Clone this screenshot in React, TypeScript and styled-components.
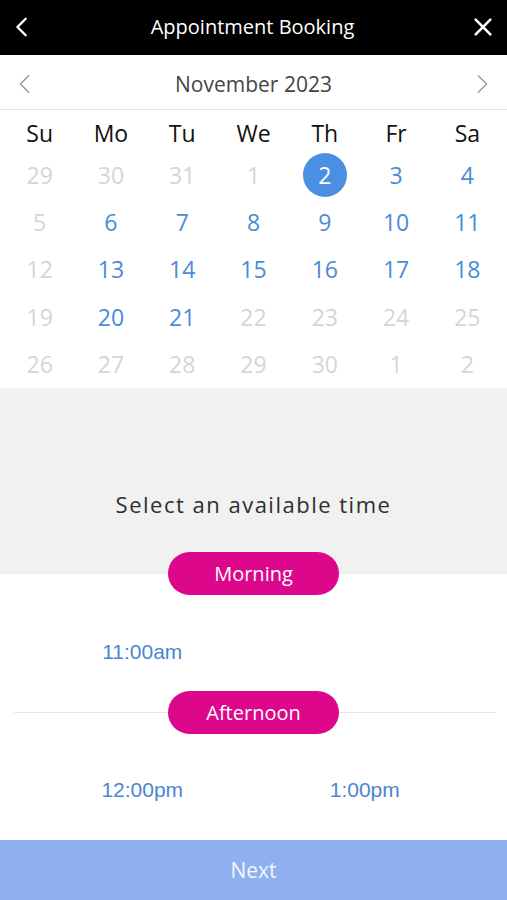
import styled, { createGlobalStyle } from 'styled-components';

const GlobalStyle = createGlobalStyle`
	html, body {
		margin: 0;
		padding: 0;
		background: #ffffff;
	}
	* {
		box-sizing: border-box;
	}
`;

const Page = styled.div`
	display: flex;
	flex-direction: column;
	width: 507px;
	height: 900px;
	overflow: hidden;
	font-family: 'Open Sans', 'Noto Sans', sans-serif;
`;

const TopBar = styled.header`
	display: flex;
	align-items: center;
	justify-content: space-between;
	height: 55px;
	padding: 0 12px 2px 10px;
	background-color: #000000;
	color: #ffffff;
	flex-shrink: 0;
`;

const Title = styled.h1`
	margin: 0;
	font-size: 20px;
	font-weight: 400;
`;

const IconButton = styled.button`
	display: flex;
	align-items: center;
	justify-content: center;
	width: 24px;
	height: 24px;
	padding: 0;
	border: none;
	background: none;
	color: inherit;
`;

const MonthBar = styled.div`
	display: flex;
	align-items: center;
	justify-content: space-between;
	height: 55px;
	padding: 3px 14px 0 14px;
	border-bottom: 1px solid #e2e2e2;
	color: #9a9a9a;
	flex-shrink: 0;
`;

const MonthLabel = styled.span`
	font-size: 21px;
	color: #454545;
`;

const Grid = styled.div`
	display: grid;
	grid-template-columns: repeat(7, 1fr);
	grid-template-rows: 41px repeat(5, 47.4px);
	padding: 0 4px;
	flex-shrink: 0;
`;

const WeekDay = styled.div`
	display: flex;
	align-items: center;
	justify-content: center;
	padding-top: 4px;
	font-size: 23px;
	color: #111111;
`;

const Day = styled.div<{ $open?: boolean; $selected?: boolean }>`
	display: flex;
	align-items: center;
	justify-content: center;
	font-size: 23px;
	color: ${(p) => (p.$selected ? '#ffffff' : p.$open ? '#4a8ad6' : '#d3d6d8')};

	span {
		display: flex;
		align-items: center;
		justify-content: center;
		width: 44px;
		height: 44px;
		border-radius: 50%;
		background-color: ${(p) => (p.$selected ? '#4a8fe2' : 'transparent')};
	}
`;

const Prompt = styled.div`
	display: flex;
	align-items: flex-end;
	justify-content: center;
	height: 164px;
	padding-bottom: 33px;
	background-color: #f1f1f1;
	font-size: 22px;
	letter-spacing: 1.5px;
	color: #2e2e2e;
	flex-shrink: 0;
`;

const Section = styled.div<{ $split?: boolean }>`
	position: relative;
	display: flex;
	justify-content: center;
	margin: 0 ${(p) => (p.$split ? '0' : '11px')};
	background: ${(p) => (p.$split ? 'linear-gradient(#f1f1f1 50%, #ffffff 50%)' : 'transparent')};

	&::before {
		content: '';
		position: absolute;
		left: 3px;
		right: 0;
		top: 50%;
		height: 1px;
		background-color: ${(p) => (p.$split ? 'transparent' : '#e8e8e8')};
	}
`;

const Pill = styled.div`
	position: relative;
	display: flex;
	align-items: center;
	justify-content: center;
	width: 171px;
	height: 43px;
	border-radius: 22px;
	background-color: #dc078b;
	color: #ffffff;
	font-size: 20px;
`;

const Slots = styled.div<{ $top: number; $bottom: number }>`
	display: grid;
	grid-template-columns: 1fr 1fr;
	grid-auto-rows: 36px;
	row-gap: 23px;
	padding: ${(p) => p.$top}px 31px ${(p) => p.$bottom}px;
`;

const Slot = styled.div`
	display: flex;
	align-items: center;
	justify-content: center;
	font-family: 'Liberation Sans', Arial, sans-serif;
	font-size: 21px;
	color: #4a86d4;
`;

const Scroll = styled.div`
	flex: 1;
	overflow: hidden;
`;

const NextBar = styled.button`
	height: 60px;
	border: none;
	background-color: #8fb0f0;
	color: #f2f6ff;
	font-family: 'Open Sans', 'Noto Sans', sans-serif;
	font-size: 21px;
	flex-shrink: 0;
`;

const Chevron = ({ dir, size, weight }: { dir: 'left' | 'right'; size: number; weight: number }) => (
	<svg width={size} height={size} viewBox="0 0 24 24" fill="none" stroke="currentColor" strokeWidth={weight} strokeLinecap="round" strokeLinejoin="round">
		<path d={dir === 'left' ? 'M16 3 L7 12 L16 21' : 'M8 3 L17 12 L8 21'} />
	</svg>
);

const weekDays = ['Su', 'Mo', 'Tu', 'We', 'Th', 'Fr', 'Sa'];

const days: [number, boolean][] = [
	[29, false], [30, false], [31, false], [1, false], [2, true], [3, true], [4, true],
	[5, false], [6, true], [7, true], [8, true], [9, true], [10, true], [11, true],
	[12, false], [13, true], [14, true], [15, true], [16, true], [17, true], [18, true],
	[19, false], [20, true], [21, true], [22, false], [23, false], [24, false], [25, false],
	[26, false], [27, false], [28, false], [29, false], [30, false], [1, false], [2, false],
];

function App() {
	return (
		<Page>
			<GlobalStyle />
			<TopBar>
				<IconButton>
					<Chevron dir="left" size={22} weight={2.6} />
				</IconButton>
				<Title>Appointment Booking</Title>
				<IconButton>
					<svg width="22" height="22" viewBox="0 0 24 24" fill="none" stroke="currentColor" strokeWidth="2.8" strokeLinecap="round">
						<path d="M4 4 L20 20 M20 4 L4 20" />
					</svg>
				</IconButton>
			</TopBar>
			<MonthBar>
				<Chevron dir="left" size={22} weight={1.6} />
				<MonthLabel>November 2023</MonthLabel>
				<Chevron dir="right" size={22} weight={1.6} />
			</MonthBar>
			<Grid>
				{weekDays.map((d) => (
					<WeekDay key={d}>{d}</WeekDay>
				))}
				{days.map(([n, open], i) => (
					<Day key={i} $open={open} $selected={i === 4}>
						<span>{n}</span>
					</Day>
				))}
			</Grid>
			<Prompt>Select an available time</Prompt>
			<Scroll>
				<Section $split>
					<Pill>Morning</Pill>
				</Section>
				<Slots $top={39} $bottom={21}>
					<Slot>11:00am</Slot>
				</Slots>
				<Section>
					<Pill>Afternoon</Pill>
				</Section>
				<Slots $top={38} $bottom={20}>
					<Slot>12:00pm</Slot>
					<Slot>1:00pm</Slot>
					<Slot>2:00pm</Slot>
					<Slot>3:00pm</Slot>
				</Slots>
			</Scroll>
			<NextBar>Next</NextBar>
		</Page>
	);
}

export default App;
